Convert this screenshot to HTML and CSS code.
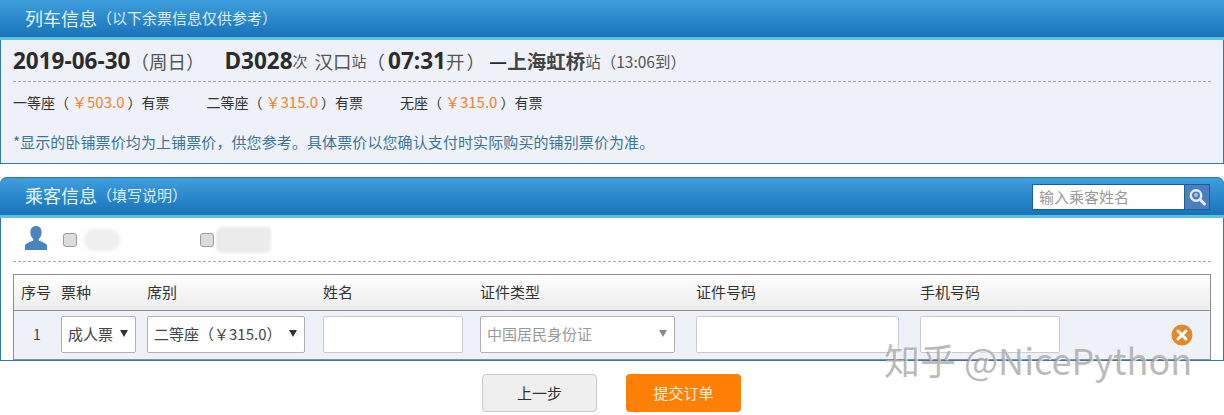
FILE: index.html
```html
<!DOCTYPE html>
<html lang="zh-CN">
<head>
<meta charset="utf-8">
<title>订单</title>
<link rel="stylesheet" href="styles.css">
</head>
<body>
<section class="panel train">
  <header class="bar bar-a"><h2>列车信息</h2><span class="note">（以下余票信息仅供参考）</span></header>
  <div class="train-body">
    <div class="route">
      <b class="num">2019-06-30</b><span class="cn-l">（周日）</span>
      <b class="num code">D3028</b><span class="sm">次</span>
      <span class="cn-l city">汉口</span><span class="sm">站</span><span class="cn-l">（</span><b class="num dep">07:31</b><span class="cn-l arr">开）</span><b class="dash">—</b><b class="cn-b">上海虹桥</b><span class="sm end">站（13:06到）</span>
    </div>
    <div class="seats">
      <span class="seat">一等座（<em>￥503.0</em>）有票</span>
      <span class="seat">二等座（<em>￥315.0</em>）有票</span>
      <span class="seat">无座（<em>￥315.0</em>）有票</span>
    </div>
    <p class="tip">*显示的卧铺票价均为上铺票价，供您参考。具体票价以您确认支付时实际购买的铺别票价为准。</p>
  </div>
</section>

<section class="panel passenger">
  <header class="bar bar-b">
    <h2>乘客信息</h2><span class="note">（填写说明）</span>
    <div class="search">
      <span class="search-input">输入乘客姓名</span>
      <span class="search-btn">
        <svg width="20" height="20" viewBox="0 0 20 20"><circle cx="9" cy="8.500" r="5.200" fill="none" stroke="#e8eef6" stroke-width="2.400"/><circle cx="9" cy="8" r="2" fill="#a9c3e2"/><path d="M13 12.500l4.500 4.500" stroke="#e8eef6" stroke-width="3" stroke-linecap="round"/></svg>
      </span>
    </div>
  </header>
  <div class="people">
    <svg class="person" width="22" height="24" viewBox="0 0 22 24"><path d="M11 0c3.600 0 5.600 2.700 5.600 6.200 0 2.800-1.200 5.300-2.800 6.700v1.900c3 1.100 7 2.300 8.200 4.200v5H0v-5c1.200-1.900 5.200-3.100 8.200-4.200v-1.900C6.600 11.500 5.400 9 5.400 6.200 5.400 2.700 7.400 0 11 0z" fill="#4a83c0"/></svg>
    <span class="check"></span><span class="blur blur-a"></span>
    <span class="check check-b"></span><span class="blur blur-b"></span>
  </div>
  <div class="grid-wrap">
    <div class="grid head">
      <span class="c-no">序号</span><span>票种</span><span>席别</span><span>姓名</span><span>证件类型</span><span>证件号码</span><span>手机号码</span><span></span>
    </div>
    <div class="grid row">
      <span class="c-no idx">1</span>
      <div class="box w-type">成人票<i class="tri"></i></div>
      <div class="box w-seat">二等座（￥315.0）<i class="tri"></i></div>
      <div class="box plain w-name"></div>
      <div class="box muted w-doc">中国居民身份证<i class="tri tri-g"></i></div>
      <div class="box plain w-id"></div>
      <div class="box plain w-phone"></div>
      <svg class="del" width="22" height="22" viewBox="0 0 22 22"><circle cx="11" cy="11" r="10.500" fill="#e08a2c"/><path d="M7 7l8 8M15 7l-8 8" stroke="#fff" stroke-width="3" stroke-linecap="round"/></svg>
    </div>
  </div>
</section>

<div class="actions">
  <span class="btn prev">上一步</span>
  <span class="btn submit">提交订单</span>
</div>

<div class="watermark">知乎 @NicePython</div>
</body>
</html>
```

FILE: styles.css
```css
* { box-sizing: border-box; }
html, body { margin: 0; padding: 0; }
body {
  position: relative;
  width: 1224px;
  height: 415px;
  overflow: hidden;
  background: #fff;
  color: #333;
  font: 15px/20px "Noto Sans CJK SC", "Liberation Sans", sans-serif;
  text-spacing-trim: space-all;
}
h2 { margin: 0; font-size: 18px; font-weight: 400; color: #e6f3fb; }
p { margin: 0; }
em { font-style: normal; color: #f0822e; padding: 0 3px; }

.panel { border: 1px solid #2f7c9f; border-top: 0; }
.train { height: 164px; background: #eef1f8; }
.passenger { height: 184px; margin-top: 13px; border-radius: 7px 7px 0 0; background: #fff; }

.bar {
  display: flex;
  align-items: center;
  padding-left: 25px;
  margin: 0 -1px;
  background: linear-gradient(#3f9fde, #1872b8);
  border-bottom: 3px solid #62bfe4;
}
.bar-a { height: 40px; padding-bottom: 2px; }
.bar-b { height: 41px; padding-bottom: 4px; border-radius: 7px 7px 0 0; border-top: 1px solid #2a7aa5; }
.note { font-size: 15px; color: #dcedf8; }

.train-body { padding: 0 12px; }
.route {
  height: 42px;
  display: flex;
  align-items: center;
  border-bottom: 1px dashed #a8a8a8;
  white-space: pre;
  color: #444;
  padding-top: 1px;
}
.num { font: 700 22.500px/24px "Open Sans", sans-serif; color: #2b2b2b; }
.code { margin-left: 20px; }
.dep { margin-left: 3px; }
.cn-l { font-size: 18.500px; color: #555; }
.arr { letter-spacing: 2px; }
.city { margin-left: 7px; }
.cn-b { font-size: 19.500px; color: #444; font-weight: 700; }
.dash { font-size: 20px; margin-left: 2px; color: #2b2b2b; }
.sm { font-size: 15px; color: #555; }
.end { font-size: 15.500px; }

.seats { display: flex; gap: 37px; margin-top: 10px; font-size: 14px; color: #333; }
.seats em { font-size: 15px; }
.tip { margin-top: 20px; letter-spacing: .1px; color: #3a7596; }

.search { display: flex; margin-left: auto; margin-right: 14px; margin-top: 4px; border: 1px solid #1a5f92; height: 26px; }
.search-input { width: 151px; background: #fff; color: #999; padding-left: 6px; line-height: 24px; }
.search-btn { width: 25px; background: #4b7fbf; display: flex; align-items: center; justify-content: center; border-left: 1px solid #1a5f92; }

.people { height: 44px; margin: 0 12px; display: flex; align-items: center; border-bottom: 1px dashed #a8a8a8; }
.person { margin: 0 0 3px 12px; }
.check {
  width: 14px; height: 14px; margin-left: 16px;
  border: 1px solid #9c9c9c; border-radius: 3px; background: #dcdcdc;
}
.check-b { margin-left: 0; }
.blur { display: block; background: #efefef; filter: blur(1.500px); }
.blur-a { width: 36px; height: 22px; margin-left: 7px; margin-right: 80px; border-radius: 11px; }
.blur-b { width: 55px; height: 26px; margin-left: 2px; border-radius: 6px 3px 6px 6px; background: #ebebeb; }

.grid-wrap { margin: 12px 12px 0; border: 1px solid #8e8e8e; height: 86px; }
.grid { display: grid; grid-template-columns: 47px 86px 176px 157px 216px 224px 252px 38px; }
.head {
  height: 36px;
  line-height: 34px;
  background: linear-gradient(#fff, #ececec);
  border-bottom: 1px solid #8e8e8e;
  color: #333;
}
.c-no { padding-left: 7px; }
.idx { padding-left: 19px; line-height: 37px; font-size: 14px; color: #444; }
.row { height: 48px; background: #eef1f8; padding-top: 5px; align-items: start; }
.box {
  height: 37px;
  background: #fff;
  border: 1px solid #b0b0b0;
  border-radius: 2px;
  display: flex;
  align-items: center;
  justify-content: space-between;
  padding: 0 7px 2px 6px;
  color: #444;
}
.plain { border-color: #c8ccd2; }
.muted { color: #999; }
.w-type { width: 75px; }
.w-seat { width: 158px; }
.w-name { width: 140px; }
.w-doc { width: 195px; }
.w-id { width: 203px; }
.w-phone { width: 140px; }
.tri { width: 0; height: 0; border: 4px solid transparent; border-top: 7px solid #333; border-bottom: 0; }
.tri-g { border-top-color: #888; }
.del { margin: 8px 0 0 -1px; justify-self: start; }

.actions { display: flex; gap: 29px; margin: 13px 0 0 482px; }
.btn {
  width: 115px; height: 38px;
  display: flex; align-items: center; justify-content: center;
  border-radius: 4px;
}
.prev { background: #efefef; border: 1px solid #c9c9c9; color: #333; }
.submit { background: #ff8005; color: #fff2e0; }

.watermark {
  position: absolute;
  left: 884px;
  top: 336px;
  font-size: 36px;
  line-height: 46px;
  white-space: nowrap;
  color: rgba(140, 140, 140, .6);
  text-shadow: 1px 1px 0 rgba(255, 255, 255, .7);
}
```
